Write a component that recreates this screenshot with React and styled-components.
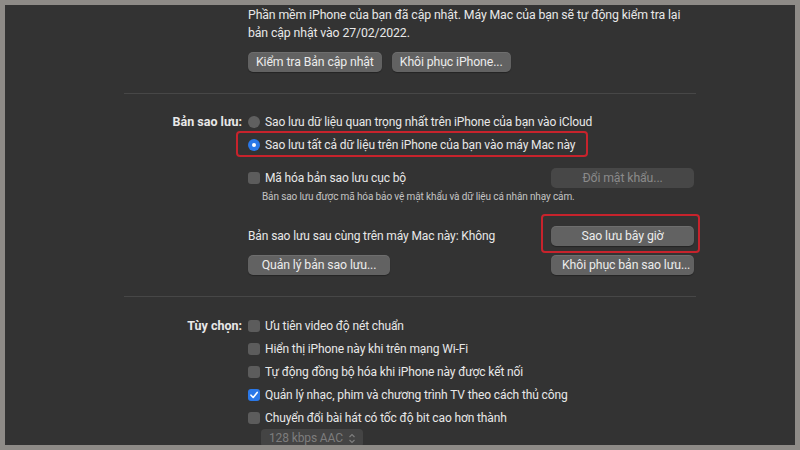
import React from "react";
import styled, { createGlobalStyle } from "styled-components";

const Global = createGlobalStyle`
  html, body { margin: 0; padding: 0; background: #8e8b87; }
  * { box-sizing: border-box; }
`;

const Frame = styled.div`
  width: 800px;
  height: 450px;
  border: 5px solid #8e8b87;
  background: #333333;
  overflow: hidden;
  font-family: Roboto, "Noto Sans", sans-serif;
  font-size: 12px;
  letter-spacing: -0.12px;
  color: #e8e8e8;
  padding-left: 119px;
`;

const Section = styled.section`
  width: 572px;
  display: grid;
  grid-template-columns: 118px 1fr;
  column-gap: 6px;
  border-top: ${(p) => (p.$first ? "none" : "1px solid #474747")};
  padding-top: ${(p) => p.$pt}px;
  padding-bottom: ${(p) => p.$pb}px;
`;

const Label = styled.div`
  text-align: right;
  font-weight: 700;
  font-size: 12.5px;
  letter-spacing: 0;
  line-height: 23px;
  white-space: nowrap;
`;

const Body = styled.div`
  display: flex;
  flex-direction: column;
  padding-right: 2px;
`;

const Para = styled.p`
  margin: 0;
  line-height: 18px;
  font-size: 12.3px;
  white-space: nowrap;
`;

const ButtonRow = styled.div`
  display: flex;
  gap: ${(p) => p.$gap ?? 10}px;
  justify-content: ${(p) => p.$justify || "flex-start"};
  align-items: center;
  margin-top: ${(p) => p.$mt ?? 0}px;
  height: ${(p) => p.$h ?? 20}px;
`;

const Button = styled.button`
  position: relative;
  height: 20px;
  width: ${(p) => (p.$w ? `${p.$w}px` : "auto")};
  padding: 0 ${(p) => p.$px ?? 11}px;
  border: none;
  border-radius: 5px;
  background: ${(p) => (p.disabled ? "#474747" : "#626262")};
  color: ${(p) => (p.disabled ? "#8a8a8a" : "#ececec")};
  box-shadow: ${(p) => (p.disabled ? "none" : "0 1px 1px rgba(0,0,0,0.3), inset 0 1px 0 rgba(255,255,255,0.08)")};
  font-family: inherit;
  font-size: 12.3px;
  letter-spacing: inherit;
  white-space: nowrap;
  text-align: center;
`;

const Row = styled.div`
  position: relative;
  display: flex;
  align-items: center;
  gap: 5px;
  height: ${(p) => p.$h ?? 23}px;
  margin-top: ${(p) => p.$mt ?? 0}px;
  white-space: nowrap;
`;

const Highlight = styled.div`
  position: absolute;
  left: ${(p) => p.$l}px;
  top: ${(p) => p.$t}px;
  width: ${(p) => p.$w}px;
  height: ${(p) => p.$hh}px;
  border: 2px solid #c7232c;
  border-radius: 4px;
  pointer-events: none;
`;

const Radio = styled.span`
  width: 12px;
  height: 12px;
  border-radius: 50%;
  flex: none;
  background: ${(p) => (p.$on ? "#2a78e8" : "#606060")};
  display: flex;
  align-items: center;
  justify-content: center;
  &::after {
    content: "";
    width: 4px;
    height: 4px;
    border-radius: 50%;
    background: ${(p) => (p.$on ? "#ffffff" : "transparent")};
  }
`;

const Box = styled.span`
  width: 12px;
  height: 12px;
  border-radius: 3px;
  flex: none;
  background: ${(p) => (p.$on ? "#2a78e8" : "#5c5c5c")};
  display: flex;
  align-items: center;
  justify-content: center;
`;

const Spacer = styled.div`
  flex: 1;
`;

const Note = styled.p`
  margin: 1px 0 0 14px;
  font-size: 10px;
  line-height: 14px;
  color: #c4c4c4;
  white-space: nowrap;
`;

const Popup = styled.div`
  margin: 0 0 0 13px;
  width: 102px;
  height: 18px;
  border-radius: 4px;
  background: #444444;
  color: #7d7d7d;
  display: flex;
  align-items: center;
  justify-content: space-between;
  padding: 0 7px 0 8px;
  font-size: 12px;
`;

const Check = () => (
  <svg width="10" height="10" viewBox="0 0 10 10">
    <polyline points="2,5.2 4.2,7.5 8.2,2.4" fill="none" stroke="#fff" strokeWidth="1.6" strokeLinecap="round" strokeLinejoin="round" />
  </svg>
);

const Chevrons = () => (
  <svg width="8" height="11" viewBox="0 0 8 11">
    <polyline points="1.5,4 4,1.5 6.5,4" fill="none" stroke="#7d7d7d" strokeWidth="1.2" />
    <polyline points="1.5,7 4,9.5 6.5,7" fill="none" stroke="#7d7d7d" strokeWidth="1.2" />
  </svg>
);

const CheckRow = ({ on, children, mt }) => (
  <Row $mt={mt}>
    <Box $on={on}>{on && <Check />}</Box>
    <span>{children}</span>
  </Row>
);

export default function App() {
  return (
    <>
      <Global />
      <Frame>
        <Section $first $pt={1} $pb={21}>
          <div />
          <Body>
            <Para>Phần mềm iPhone của bạn đã cập nhật. Máy Mac của bạn sẽ tự động kiểm tra lại</Para>
            <Para>bản cập nhật vào 27/02/2022.</Para>
            <ButtonRow $mt={10}>
              <Button $px={8}>Kiểm tra Bản cập nhật</Button>
              <Button $px={8}>Khôi phục iPhone...</Button>
            </ButtonRow>
          </Body>
        </Section>

        <Section $pt={16} $pb={21}>
          <Label>Bản sao lưu:</Label>
          <Body>
            <Row>
              <Radio />
              <span>Sao lưu dữ liệu quan trọng nhất trên iPhone của bạn vào iCloud</span>
            </Row>
            <Row>
              <Highlight $l={-12} $t={-2} $w={352} $hh={26} />
              <Radio $on />
              <span>Sao lưu tất cả dữ liệu trên iPhone của bạn vào máy Mac này</span>
            </Row>
            <Row $mt={10}>
              <Box />
              <span>Mã hóa bản sao lưu cục bộ</span>
              <Spacer />
              <Button disabled $w={143}>Đổi mật khẩu...</Button>
            </Row>
            <Note>Bản sao lưu được mã hóa bảo vệ mật khẩu và dữ liệu cá nhân nhạy cảm.</Note>
            <Row $mt={22} $h={20}>
              <Highlight $l={293} $t={-12} $w={159} $hh={39} />
              <span>Bản sao lưu sau cùng trên máy Mac này: Không</span>
              <Spacer />
              <Button $w={143}>Sao lưu bây giờ</Button>
            </Row>
            <ButtonRow $mt={9} $justify="space-between">
              <Button $w={142}>Quản lý bản sao lưu...</Button>
              <Button $w={143}>Khôi phục bản sao lưu...</Button>
            </ButtonRow>
          </Body>
        </Section>

        <Section $pt={17} $pb={0}>
          <Label>Tùy chọn:</Label>
          <Body>
            <CheckRow>Ưu tiên video độ nét chuẩn</CheckRow>
            <CheckRow>Hiển thị iPhone này khi trên mạng Wi-Fi</CheckRow>
            <CheckRow>Tự động đồng bộ hóa khi iPhone này được kết nối</CheckRow>
            <CheckRow on>Quản lý nhạc, phim và chương trình TV theo cách thủ công</CheckRow>
            <CheckRow>Chuyển đổi bài hát có tốc độ bit cao hơn thành</CheckRow>
            <Popup>
              <span>128 kbps AAC</span>
              <Chevrons />
            </Popup>
          </Body>
        </Section>
      </Frame>
    </>
  );
}
